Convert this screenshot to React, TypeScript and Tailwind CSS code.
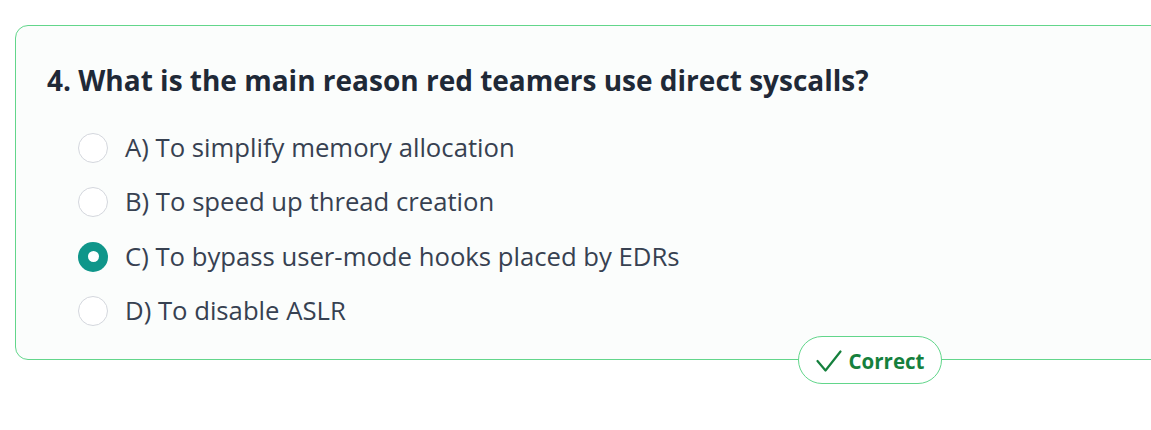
const options = [
  { id: "A", label: "To simplify memory allocation" },
  { id: "B", label: "To speed up thread creation" },
  { id: "C", label: "To bypass user-mode hooks placed by EDRs" },
  { id: "D", label: "To disable ASLR" },
];

function Radio({ checked }: { checked: boolean }) {
  if (checked) {
    return (
      <span className="w-[30px] h-[30px] rounded-full bg-[#0f968a] flex items-center justify-center flex-shrink-0">
        <span className="w-[11px] h-[11px] rounded-full bg-white" />
      </span>
    );
  }
  return (
    <span className="w-[30px] h-[30px] rounded-full border-[1.5px] border-[#d4d7dd] bg-white flex-shrink-0" />
  );
}

export default function App() {
  return (
    <div className="w-full h-[430px] overflow-hidden bg-white font-['Open_Sans','Noto_Sans',sans-serif]">
      <div className="pt-[25px] pl-[15px]">
        {/* Question card */}
        <div className="relative w-[1710px] h-[335px] rounded-[13px] border-[1.5px] border-[#62d68b] bg-[#fbfdfc] pt-[36px] pl-[31px]">
          <h2 className="text-[28px] leading-[36px] font-bold text-[#1f2937]">
            4. What is the main reason red teamers use direct syscalls?
          </h2>

          <div className="mt-[34.5px] pl-[31px] flex flex-col gap-[24.5px]">
            {options.map((opt) => (
              <label key={opt.id} className="flex items-center gap-[17px] h-[30px]">
                <Radio checked={opt.id === "C"} />
                <span className="text-[25.7px] leading-[30px] text-[#374151]">
                  {opt.id}) {opt.label}
                </span>
              </label>
            ))}
          </div>

          {/* Result badge */}
          <div className="absolute left-1/2 -translate-x-1/2 bottom-[-25px] h-[48px] w-[144px] rounded-full border-[1.5px] border-[#62d68b] bg-white flex items-center justify-center gap-[7px] pt-[2px]">
            <svg width="26" height="24" viewBox="0 0 26 24" fill="none" className="text-[#15803d]">
              <polyline
                points="1.5,12 9.5,21.5 24.5,2.5"
                stroke="currentColor"
                strokeWidth="2.2"
                strokeLinecap="round"
                strokeLinejoin="round"
              />
            </svg>
            <span className="text-[20.5px] font-bold text-[#15803d]">Correct</span>
          </div>
        </div>
      </div>
    </div>
  );
}
